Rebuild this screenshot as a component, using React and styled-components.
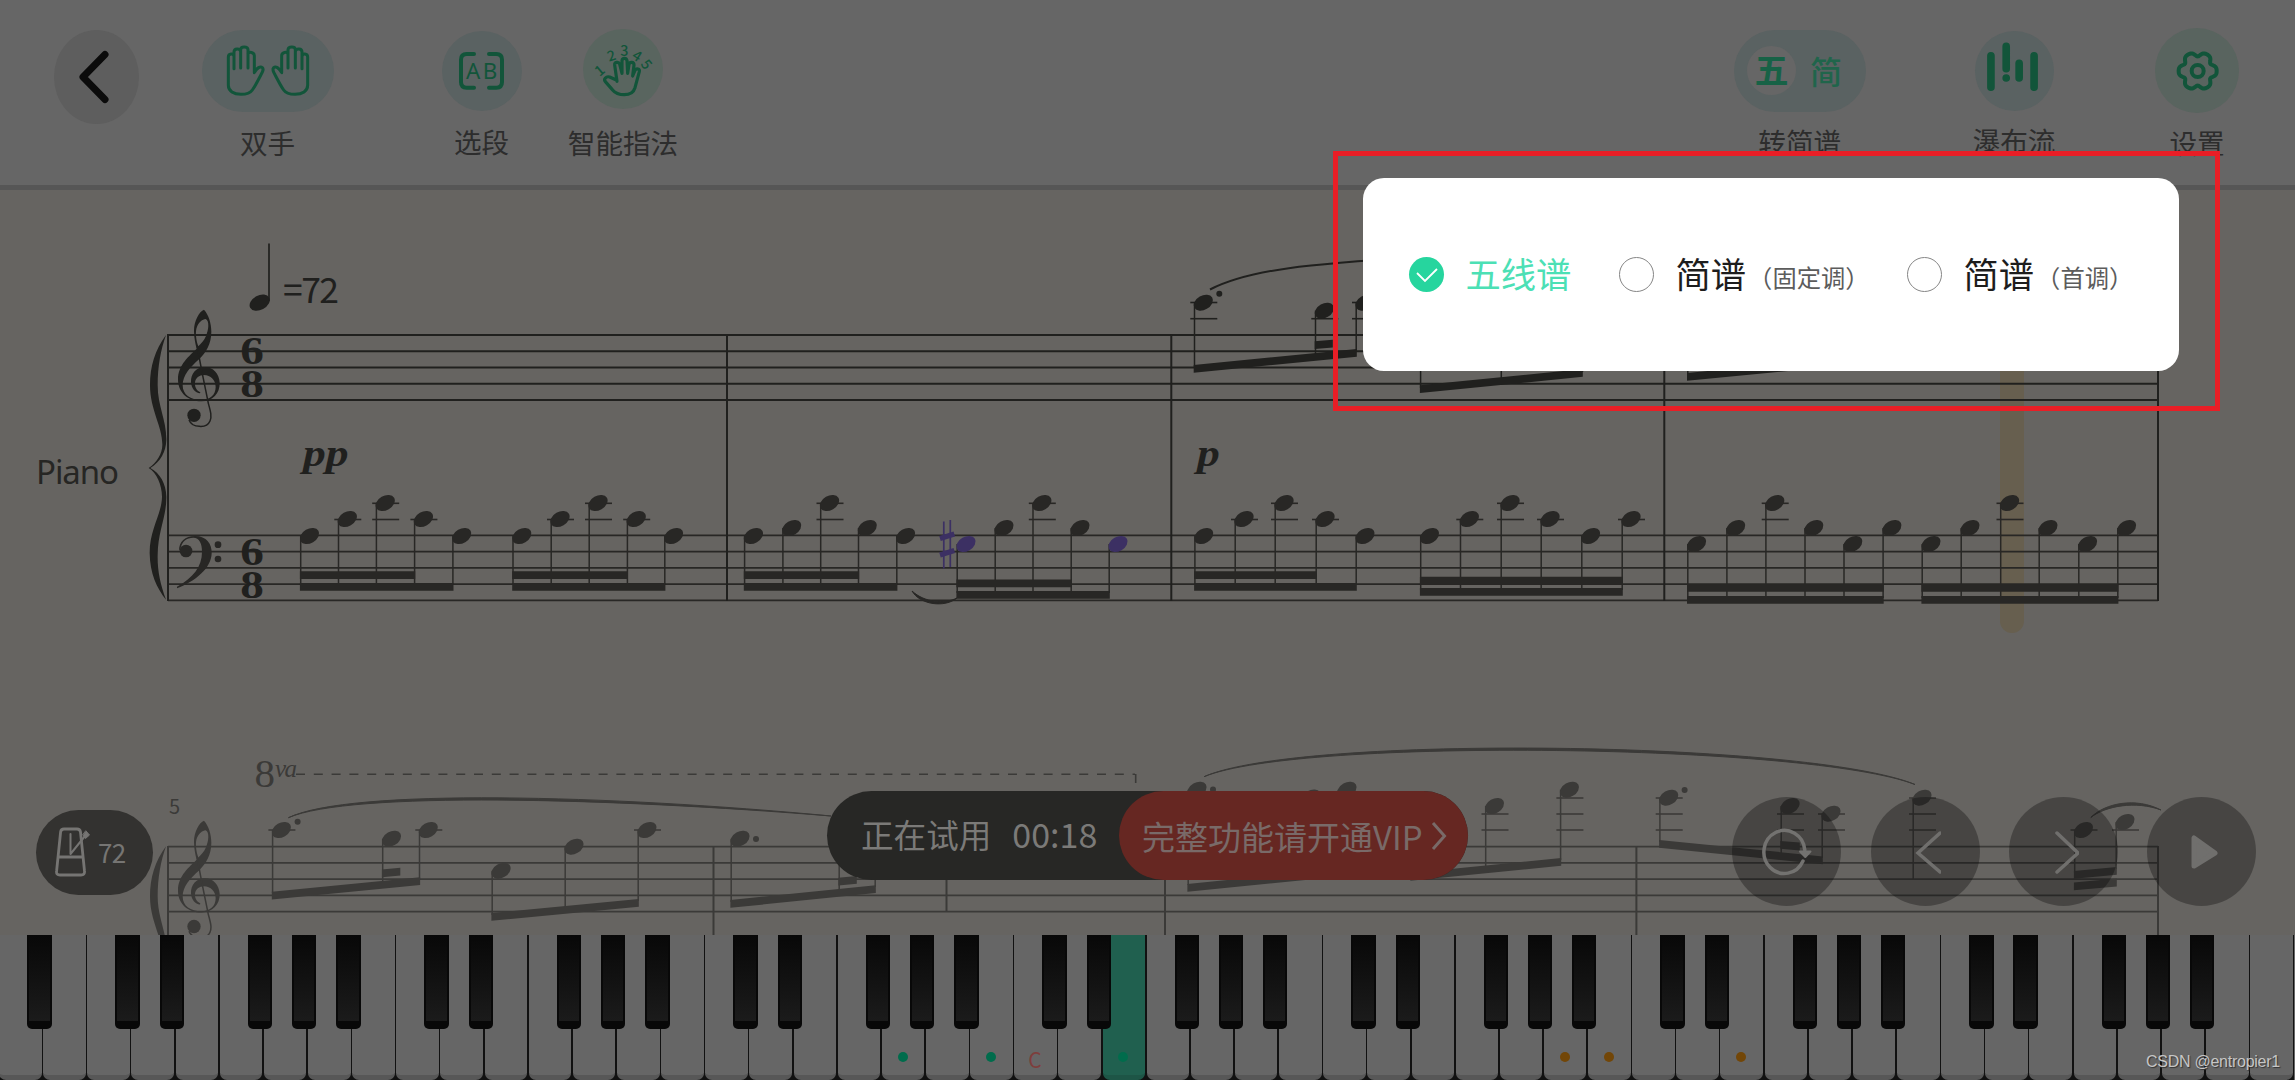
import React from "react";
import styled, { createGlobalStyle } from "styled-components";

const SANS = `"Noto Sans CJK SC", "Noto Sans", sans-serif`;
const SERIF = `"Liberation Serif", serif`;

const GlobalStyle = createGlobalStyle`
  * { box-sizing: border-box; }
  body { margin: 0; background: #666; font-family: ${SANS}; }
`;

const Page = styled.div`
  position: relative;
  display: flex;
  flex-direction: column;
  width: 2295px;
  height: 1080px;
  overflow: hidden;
`;

/* ---------- toolbar ---------- */

const Toolbar = styled.header`
  display: flex;
  flex: none;
  height: 190px;
  padding: 0 56px 0 54px;
  background: #666666;
  border-bottom: 5px solid #565656;
`;

const BackButton = styled.div`
  display: flex;
  align-items: center;
  justify-content: center;
  width: 85px;
  height: 94px;
  margin-top: 30px;
  padding-right: 6px;
  border-radius: 50%;
  background: #5e5e5e;
`;

const ToolItem = styled.div`
  display: flex;
  flex-direction: column;
  align-items: center;
  width: ${(p) => p.$w}px;
  margin-left: ${(p) => (p.$gap === "auto" ? "auto" : `${p.$gap}px`)};
`;

const IconArea = styled.div`
  height: ${(p) => p.$labelTop || 126.5}px;
  padding-top: ${(p) => p.$top}px;
`;

const IconPill = styled.div`
  display: flex;
  align-items: center;
  justify-content: center;
  width: ${(p) => p.$w}px;
  height: ${(p) => p.$h}px;
  border-radius: 42px;
  background: ${(p) => p.$bg || "#5a6262"};
  svg { display: block; overflow: visible; }
`;

const ToolLabel = styled.div`
  font-size: 27.6px;
  line-height: 28px;
  white-space: nowrap;
  color: #2d2d2d;
`;

const SwitchPill = styled(IconPill)`
  justify-content: flex-start;
  padding-left: 13px;
  gap: 14px;
`;

const SwitchActive = styled.span`
  display: flex;
  align-items: center;
  justify-content: center;
  width: 49px;
  height: 49px;
  border-radius: 50%;
  background: #666666;
  color: #176246;
  font-size: 34px;
  font-weight: 700;
  line-height: 46px;
  padding-bottom: 3px;
`;

const SwitchOther = styled.span`
  color: #20654b;
  font-size: 32px;
  font-weight: 500;
  line-height: 47px;
  padding-bottom: 1px;
`;

/* ---------- score ---------- */

const Score = styled.main`
  position: relative;
  flex: none;
  height: 745px;
  background: #666461;
  > svg { display: block; }
`;

const TempoPill = styled.div`
  position: absolute;
  left: 36px;
  top: 620px;
  display: flex;
  align-items: center;
  gap: 7px;
  width: 117px;
  height: 85px;
  padding: 0 0 2px 19px;
  border-radius: 43px;
  background: #333230;
  color: #767573;
  font-size: 26px;
  letter-spacing: -0.7px;
`;

const TrialBar = styled.div`
  position: absolute;
  left: 827px;
  top: 601px;
  display: flex;
  width: 641px;
  height: 89px;
  border-radius: 45px;
  background: #272725;
  color: #7b7a78;
  font-size: 32.6px;
  line-height: 86px;
  white-space: nowrap;
`;

const TrialStatus = styled.div`
  display: flex;
  width: 292px;
  padding-left: 34px;
  gap: 21px;
`;

const TrialTime = styled.span`
  font-size: 34px;
`;

const VipButton = styled.div`
  display: flex;
  align-items: center;
  flex: 1;
  padding-left: 23px;
  gap: 8px;
  border-radius: 45px;
  background: #662722;
  color: #796a68;
  font-size: 33px;
`;

const Transport = styled.div`
  position: absolute;
  right: 39px;
  top: 607px;
  display: flex;
  gap: 29.2px;
`;

const RoundButton = styled.div`
  display: flex;
  align-items: center;
  justify-content: center;
  width: 109px;
  height: 109px;
  border-radius: 50%;
  background: rgba(0, 0, 0, 0.3);
`;

/* ---------- keyboard ---------- */

const Keyboard = styled.footer`
  display: flex;
  flex: none;
  width: 2295px;
  height: 145px;
  margin-left: -1px;
  background: #111;
`;

const WhiteKey = styled.div`
  position: relative;
  display: flex;
  flex: 1 1 0;
  flex-direction: column;
  align-items: center;
  justify-content: flex-end;
  margin-right: 1.6px;
  border-bottom: 5px solid ${(p) => (p.$pressed ? "#1d5546" : "#575757")};
  border-radius: 0 0 7px 7px;
  background: ${(p) => (p.$pressed ? "#20604f" : "#666666")};
`;

const BlackKey = styled.div`
  position: absolute;
  z-index: 1;
  right: -10px;
  top: 0;
  width: 24.4px;
  height: 94px;
  border: solid #080808;
  border-width: 0 2px 8px;
  border-radius: 0 0 5px 5px;
  background: linear-gradient(#080808, #1b1b1b);
`;

const Dot = styled.i`
  width: 10px;
  height: 10px;
  margin: 0 1px 13px 0;
  border-radius: 50%;
  background: ${(p) => p.$color};
`;

const KeyName = styled.span`
  margin-bottom: 1px;
  padding-right: 1px;
  font-size: 21px;
  line-height: 30px;
  color: #7e3e3c;
`;

const Watermark = styled.div`
  position: absolute;
  right: 15px;
  bottom: 7px;
  font: 16px/22px "Liberation Sans", sans-serif;
  letter-spacing: -0.25px;
  color: #c6c6c6;
  text-shadow: 1px 1px 1px #333;
  z-index: 3;
`;

/* ---------- notation chooser ---------- */

const Highlight = styled.div`
  position: absolute;
  left: 1333px;
  top: 151px;
  width: 887px;
  height: 260px;
  border: 5px solid #e91e26;
`;

const Popup = styled.div`
  position: absolute;
  left: 1363px;
  top: 178px;
  display: flex;
  align-items: center;
  width: 816px;
  height: 193px;
  padding-left: 46px;
  border-radius: 21px;
  background: #fff;
`;

const Option = styled.div`
  display: flex;
  align-items: center;
  width: ${(p) => p.$w}px;
  color: ${(p) => (p.$selected ? "#4ce0b5" : "#1d1d1d")};
  font-size: 35.3px;
  line-height: 46px;
  white-space: nowrap;
`;

const OptionName = styled.span`
  padding-bottom: 3px;
`;

const Radio = styled.span`
  display: flex;
  align-items: center;
  justify-content: center;
  width: 35px;
  height: 35px;
  margin-right: 21.5px;
  border: ${(p) => (p.$selected ? "0" : "1.6px solid #868686")};
  border-radius: 50%;
  background: ${(p) => (p.$selected ? "#26d59e" : "#fff")};
`;

const Hint = styled.small`
  margin-left: 2px;
  padding-top: 4px;
  font-size: 24.3px;
  color: #5c5c5c;
`;

/* ---------- toolbar icons ---------- */

const GREEN = "#12553a";

const HAND =
  "M114 195V110C114 98 130 98 131 108V145M131 108V95C131 83 149 83 151 93V143M151 93V88C151 77 172 77 173 88V143M173 100C176 93 192 96 192 106V157C200 142 210 137 216 142C221 147 217 154 212 163C203 180 196 195 186 209C180 218 168 222 152 222C130 222 114 212 114 195";

const HandsIcon = () => (
  <svg width="84" height="52" viewBox="107 74 252 156" fill="none" stroke={GREEN} strokeWidth="9" strokeLinejoin="round" strokeLinecap="round">
    <path d={HAND} />
    <path d={HAND} transform="translate(466 0) scale(-1 1)" />
  </svg>
);

const SectionIcon = () => (
  <svg width="45" height="38" viewBox="807 97 135 114" fill="none" stroke={GREEN} strokeWidth="12" strokeLinecap="round">
    <path d="M852 103H830Q813 103 813 120V187Q813 204 830 204H852" />
    <path d="M897 103H919Q936 103 936 120V187Q936 204 919 204H897" />
    <g fill={GREEN} stroke="none" fontFamily={`"Noto Sans", sans-serif`} fontSize="67">
      <text x="828" y="178">A</text>
      <text x="878" y="178">B</text>
    </g>
  </svg>
);

const FINGERS = [
  ["1", 1228, 152, -40],
  ["2", 1263, 107, -18],
  ["3", 1302, 93, 0],
  ["4", 1340, 108, 32],
  ["5", 1368, 133, 52],
];

const FingeringIcon = () => (
  <svg width="80" height="80" viewBox="1178 27 240 240" fill="none">
    <path
      d="M1278 180L1258 171C1247 168 1239 177 1245 185L1266 209C1276 221 1288 224 1302 224C1318 224 1330 216 1334 203L1347 155C1349 146 1338 144 1334 151L1327 168L1331 135C1331 125 1318 125 1316 133L1312 160L1310 122C1308 113 1296 113 1295 122V160L1288 132C1285 124 1272 126 1273 135L1280 184"
      stroke={GREEN}
      strokeWidth="9.5"
      strokeLinejoin="round"
      strokeLinecap="round"
    />
    <g fill={GREEN} fontFamily={SANS} fontSize="43" fontWeight="500" textAnchor="middle">
      {FINGERS.map(([n, x, y, a]) => (
        <text key={n} transform={`translate(${x} ${y}) rotate(${a})`} y="15">{n}</text>
      ))}
    </g>
  </svg>
);

const WaterfallIcon = () => (
  <svg width="79" height="80" viewBox="763 33 238 240" stroke={GREEN} strokeWidth="23" strokeLinecap="round">
    <path d="M811 107V202M857 79V146M896 130V174M941 107V202M857 174V174.1" />
  </svg>
);

const gearPath = Array.from({ length: 121 }, (_, i) => {
  const t = (i / 120) * Math.PI * 2;
  const r = 52 + 6.6 * Math.cos(6 * t) - 1.6 * Math.cos(12 * t);
  return `${i ? "L" : "M"}${(r * Math.cos(t)).toFixed(2)} ${(r * Math.sin(t)).toFixed(2)}`;
}).join("");

const GearIcon = () => (
  <svg width="44" height="44" viewBox="-68 -66 132 132" fill="none" stroke={GREEN} strokeWidth="12" strokeLinejoin="round">
    <path d={gearPath} />
    <circle r="18" />
  </svg>
);

/* ---------- notation ---------- */

const TOP = "#20201e";
const BASS = "#282725";
const LOW = "#3b3a38";
const PURPLE = "#3c3063";

const Head = ({ x, y, color, r = 10.3 }) => (
  <ellipse cx={x + 9} cy={y} rx={r} ry="7.1" transform={`rotate(-30 ${x + 9} ${y})`} fill={color} />
);

const Note = ({ x, y, end, color, head = color, ledgers = [] }) => (
  <g>
    {ledgers.map((l) => (
      <path key={l} d={`M${x - 4} ${l}h27`} stroke={color} strokeWidth="1.6" />
    ))}
    {end && <path d={`M${x + 0.2} ${y}V${end}`} stroke={color} strokeWidth="1.5" />}
    <Head x={x} y={y} color={head} />
  </g>
);

const Beam = ({ x1, y1, x2, y2, color }) => (
  <path d={`M${x1 - 0.6} ${y1}L${x2 + 0.8} ${y2}v7.8L${x1 - 0.6} ${y1 + 7.8}z`} fill={color} />
);

const bassLedgers = (y) => (y < 510 ? [503.3, 519.5] : y < 522 ? [519.5] : []);

/* xs: stem positions, ys: head positions, inner/outer: tops of the beams, n: stems under the inner beam */
const BASS_GROUPS = [
  { xs: [300.5, 338.3, 376.2, 414.4, 452.7], ys: [536, 519, 503, 519, 536], inner: 571.3, outer: 583, n: 4 },
  { xs: [512.8, 551, 589, 627.2, 664.6], ys: [536, 519, 503, 519, 536], inner: 571.3, outer: 583, n: 4 },
  { xs: [744.4, 782.7, 820.5, 858.3, 896.6], ys: [536, 528, 503, 528, 536], inner: 571.3, outer: 583, n: 4 },
  { xs: [957, 995, 1032.8, 1071, 1109], ys: [544, 528, 503, 528, 544], inner: 579.5, outer: 591, n: 4, purple: [0, 4] },
  { xs: [1194.7, 1235, 1275, 1316, 1356], ys: [536, 519, 503, 519, 536], inner: 571.3, outer: 583, n: 4 },
  { xs: [1420.5, 1460.3, 1501, 1541, 1581.6, 1622], ys: [536, 519, 503, 519, 536, 519], inner: 576.7, outer: 588, n: 6 },
  { xs: [1687.6, 1726.7, 1765.7, 1804.8, 1843.8, 1882.9], ys: [544, 528, 503, 528, 544, 528], inner: 584, outer: 596, n: 6 },
  { xs: [1922, 1961, 2000.5, 2039, 2078.6, 2117.6], ys: [544, 528, 503, 528, 544, 528], inner: 584, outer: 596, n: 6 },
];

const LOW_NOTES = [
  [272.4, 830, 893, [830]],
  [382.5, 838.7, 882],
  [419.3, 830, 880, [830]],
  [492, 870.7, 915],
  [565, 846.7, 907],
  [638, 830, 901, [830]],
  [731, 838.7, 902],
  [839, 838.7, 889],
  [875, 830, 887, [830]],
  [1188, 789.7, 885],
  [1302, 797.5, 873],
  [1338, 789.7, 870],
  [1411, 822, 875],
  [1485.5, 806, 867, [814, 830]],
  [1560.4, 789.7, 860, [798, 814, 830]],
  [1659.7, 797.7, 842, [798, 814, 830]],
  [1781, 806, 853, [814, 830]],
  [1822, 813.7, 858, [814, 830]],
  [1913, 797.7, 879, [798, 814, 830]],
  [2074.5, 830, 873, [830]],
  [2116, 822, 869, [830]],
];

const LOW_BEAMS = [
  [272.4, 891.8, 419.3, 877.3],
  [382.5, 869.4, 399.5, 867.7],
  [492, 913, 638, 899],
  [731, 900, 875, 885.3],
  [839, 877.7, 856, 876],
  [1188, 884, 1347, 868],
  [1411, 873, 1560.4, 858],
  [1659.7, 840, 1822, 856.4],
  [1781, 841, 1799, 842.6],
  [2074.5, 871, 2116, 867],
  [2074.5, 882.4, 2116, 878.6],
];

const Staff = ({ y, color }) =>
  [0, 1, 2, 3, 4].map((i) => (
    <path key={i} d={`M168 ${y + i * 16.25}H2158`} stroke={color} strokeWidth="1.8" />
  ));

const TrebleClef = ({ color }) => (
  <g>
    <path
      fill={color}
      fillRule="evenodd"
      d="M192 239C178 244 162 272 162 302C162 322 166 340 170 356C150 376 113 404 114 450C115 490 146 514 184 514C218 514 240 490 239 458C238 430 218 410 193 411C168 411 152 432 153 456C154 476 166 488 180 490L181 487C170 481 164 472 165 458C166 444 178 435 192 435C212 435 227 450 227 471C227 495 209 510 184 510C152 510 128 495 128 466C128 436 150 412 178 387C198 367 214 342 214 305C214 280 206 254 192 239ZM197 267C209 272 206 300 198 318C192 332 184 340 175 349C168 330 165 305 171 290C177 276 187 268 197 267Z"
    />
    <path d="M172 350C180 400 195 470 205 520C212 545 216 560 210 573C204 587 190 590 178 589C165 589 152 582 147 570" fill="none" stroke={color} strokeWidth="4.5" />
    <circle cx="162" cy="556" r="20" fill={color} />
  </g>
);

const BRACE =
  "M78 315C45 360 30 410 30 465C30 540 68 590 67 645C67 670 50 700 26 714C50 728 66 765 66 800C66 850 28 900 29 970C30 1030 50 1075 78 1109C60 1060 52 1020 53 975C54 900 80 860 79 800C78 760 60 730 31 714C62 695 78 665 79 630C80 570 53 530 53 465C53 410 62 360 78 315Z";

const ScoreSheet = () => (
  <svg width="2295" height="745" viewBox="0 190 2295 745">
    <path d="M2000 300H2024V621a12 12 0 0 1-24 0Z" fill="#675f4f" />

    {/* first system */}
    <Staff y={335} color={TOP} />
    <Staff y={535.4} color={BASS} />
    <path d="M168 334V601M727 334V601M1171.3 334V601M1664.3 334V601M2158 334V601" stroke={TOP} strokeWidth="2" />
    <g transform="translate(140 230) scale(.33333)">
      <TrebleClef color={TOP} />
      <path d={BRACE} fill={TOP} />
      <circle cx="138" cy="963" r="19" fill={BASS} />
      <path
        fill={BASS}
        d="M117 962C117 935 135 918 165 918C200 918 216 942 215 970C214 1015 165 1055 111 1075V1070C160 1042 186 1010 186 965C186 940 178 923 160 923C140 923 125 935 122 955Z"
      />
      <circle cx="234" cy="944" r="10" fill={BASS} />
      <circle cx="234" cy="987" r="10" fill={BASS} />
    </g>
    <g fontFamily={SERIF} fontWeight="700" fontSize="41" textAnchor="middle" fill={TOP}>
      {[["6", 364.3], ["8", 397.3], ["6", 565.2], ["8", 597.7]].map(([n, y]) => (
        <text key={y} transform={`translate(252 ${y}) scale(1.15 1)`}>{n}</text>
      ))}
    </g>
    <g fontFamily={SERIF} fontWeight="700" fontStyle="italic" fontSize="38" fill={TOP}>
      <text transform="translate(303 465.5) scale(1.2 1)">pp</text>
      <text transform="translate(1197 465.5) scale(1.2 1)">p</text>
    </g>
    <text x="36" y="484" fontFamily={`"Noto Sans", sans-serif`} fontSize="33" fill="#262624" textLength="83">Piano</text>

    <ellipse cx="259.7" cy="302.7" rx="10.8" ry="7.2" transform="rotate(-28 259.7 302.7)" fill={TOP} />
    <path d="M269 243.5V301" stroke={TOP} strokeWidth="1.7" />
    <text x="283" y="303" fontFamily={SANS} fontSize="35.5" fill={TOP} textLength="56">=72</text>

    {BASS_GROUPS.map((g) => (
      <g key={g.xs[0]}>
        {g.xs.map((x, i) => (
          <Note
            key={x}
            x={x}
            y={g.ys[i]}
            end={g.outer + 2}
            color={BASS}
            head={g.purple && g.purple.includes(i) ? PURPLE : BASS}
            ledgers={bassLedgers(g.ys[i])}
          />
        ))}
        <Beam x1={g.xs[0]} y1={g.inner} x2={g.xs[g.n - 1]} y2={g.inner} color={BASS} />
        <Beam x1={g.xs[0]} y1={g.outer} x2={g.xs[g.xs.length - 1]} y2={g.outer} color={BASS} />
      </g>
    ))}
    <g stroke={PURPLE}>
      <path d="M943.8 521.5V568.5M950.3 520V567" strokeWidth="1.7" />
      <path d="M940 538.5L954.3 534M940 555L954.3 550.5" strokeWidth="5" />
    </g>
    <path d="M912 591C920 605 945 608 957 598C945 604 925 603 912 591Z" fill={BASS} stroke={BASS} />

    <path d="M1210 289.5C1250 269 1310 264 1420 257" fill="none" stroke={TOP} strokeWidth="2" />
    <Note x={1194.3} y={302.7} end={367} color={TOP} ledgers={[302.5, 318.7]} />
    <circle cx="1219.3" cy="293.8" r="3" fill={TOP} />
    <Note x={1315.3} y={310.7} end={354} color={TOP} ledgers={[318.7]} />
    <Note x={1356} y={302.7} end={351} color={TOP} ledgers={[302.5, 318.7]} />
    <Beam x1={1194.3} y1={365} x2={1356} y2={349} color={TOP} />
    <Beam x1={1315.3} y1={341.3} x2={1332} y2={339.8} color={TOP} />
    <path d="M1420.6 340V388M1501.3 340V379M1582.5 340V372M1687.8 340V376" stroke={TOP} strokeWidth="1.5" />
    <Beam x1={1420.5} y1={385.3} x2={1582} y2={369} color={TOP} />
    <Beam x1={1687.6} y1={373} x2={1850} y2={357} color={TOP} />

    {/* second system */}
    <Staff y={846.7} color={LOW} />
    <path d="M168 846V935M713.5 846V935M1165 846V935M1636.4 846V935M2158 846V935M946.5 870V911" stroke={LOW} strokeWidth="2" />
    <g transform="translate(140 741.2) scale(.33333)">
      <TrebleClef color={LOW} />
      <path d={BRACE} fill={LOW} />
    </g>
    <text x="169" y="813.5" fontFamily={SANS} fontSize="20" fill={LOW}>5</text>
    <text x="254.5" y="787" fontFamily={SERIF} fontSize="41" fill={LOW}>8</text>
    <text x="275" y="776.5" fontFamily={SERIF} fontStyle="italic" fontSize="25" fill={LOW} textLength="22">va</text>
    <path d="M296 774.3H1135" stroke={LOW} strokeWidth="1.6" strokeDasharray="9 8.8" />
    <path d="M1135.7 774V783" stroke={LOW} strokeWidth="1.6" />
    {LOW_NOTES.map(([x, y, end, ledgers]) => (
      <Note key={x} x={x} y={y} end={end} ledgers={ledgers} color={LOW} />
    ))}
    {LOW_BEAMS.map(([x1, y1, x2, y2]) => (
      <Beam key={`${x1}-${y1}`} x1={x1} y1={y1} x2={x2} y2={y2} color={LOW} />
    ))}
    {[[297.6, 821.8], [756, 839], [1213, 789.5], [1684.6, 790]].map(([x, y]) => (
      <circle key={x} cx={x} cy={y} r="3" fill={LOW} />
    ))}
    <g fill={LOW} stroke={LOW} strokeWidth="1">
      <path d="M288.4 817.7C350 788 610 795 831 816C610 798 350 791 288.4 817.7Z" />
      <path d="M1204 776.7C1300 734 1810 741 1915 784.5C1810 744 1300 737 1204 776.7Z" />
      <path d="M2090.8 817.5C2105 803 2136 797 2161 810C2136 800.5 2105 806 2090.8 817.5Z" />
    </g>
  </svg>
);

const MetronomeIcon = () => (
  <svg width="36" height="50" viewBox="0 0 36 50" fill="none" stroke="#767573" strokeWidth="2.8" strokeLinejoin="round" strokeLinecap="round">
    <path d="M9 2H22Q25 2 25.5 5L29.5 44Q30 48 26 48H5Q1 48 1.6 44L5.6 5Q6 2 9 2Z" />
    <path d="M4 30H27" />
    <path d="M15.5 7V27L30 9" strokeWidth="2" />
    <path d="M31 4L34.5 8L30.5 11.5L28 8Z" fill="#767573" strokeWidth="1" />
  </svg>
);

/* ---------- keyboard data ---------- */

const OCTAVE = "ABCDEFG";
const DOTS = { 20: "#006c4c", 22: "#006c4c", 25: "#006c4c", 35: "#724607", 36: "#724607", 39: "#724607" };
const PRESSED = 25;
const MIDDLE_C = 23;

const KEYS = Array.from({ length: 52 }, (_, i) => ({
  i,
  sharp: "ACDFG".includes(OCTAVE[i % 7]) && i < 51,
}));

export default function App() {
  return (
    <Page>
      <GlobalStyle />
      <Toolbar>
        <BackButton>
          <svg width="32" height="54" viewBox="0 0 32 54" fill="none" stroke="#0b0b0b" strokeWidth="7" strokeLinecap="round" strokeLinejoin="round">
            <path d="M27 4.5L5 27L27 49.5" />
          </svg>
        </BackButton>
        <ToolItem $w={132} $gap={62.5}>
          <IconArea $top={29.5} $labelTop={127.5}>
            <IconPill $w={132} $h={82}><HandsIcon /></IconPill>
          </IconArea>
          <ToolLabel>双手</ToolLabel>
        </ToolItem>
        <ToolItem $w={80} $gap={108}>
          <IconArea $top={31}>
            <IconPill $w={80} $h={80}><SectionIcon /></IconPill>
          </IconArea>
          <ToolLabel>选段</ToolLabel>
        </ToolItem>
        <ToolItem $w={80} $gap={61.5}>
          <IconArea $top={29} $labelTop={127.5}>
            <IconPill $w={80} $h={80} $bg="#59655f"><FingeringIcon /></IconPill>
          </IconArea>
          <ToolLabel>智能指法</ToolLabel>
        </ToolItem>
        <ToolItem $w={131.5} $gap="auto">
          <IconArea $top={29.5}>
            <SwitchPill $w={131.5} $h={82}>
              <SwitchActive>五</SwitchActive>
              <SwitchOther>简</SwitchOther>
            </SwitchPill>
          </IconArea>
          <ToolLabel>转简谱</ToolLabel>
        </ToolItem>
        <ToolItem $w={79} $gap={109}>
          <IconArea $top={31} $labelTop={125.5}>
            <IconPill $w={79} $h={80}><WaterfallIcon /></IconPill>
          </IconArea>
          <ToolLabel>瀑布流</ToolLabel>
        </ToolItem>
        <ToolItem $w={84} $gap={101.5}>
          <IconArea $top={28} $labelTop={127.5}>
            <IconPill $w={84} $h={85} $bg="#59645f"><GearIcon /></IconPill>
          </IconArea>
          <ToolLabel>设置</ToolLabel>
        </ToolItem>
      </Toolbar>

      <Score>
        <ScoreSheet />
        <TempoPill>
          <MetronomeIcon />
          <span>72</span>
        </TempoPill>
        <TrialBar>
          <TrialStatus>
            <span>正在试用</span>
            <TrialTime>00:18</TrialTime>
          </TrialStatus>
          <VipButton>
            <span>完整功能请开通VIP</span>
            <svg width="16" height="30" viewBox="0 0 16 30" fill="none" stroke="#796a68" strokeWidth="3">
              <path d="M2 2L13.5 15L2 28" />
            </svg>
          </VipButton>
        </TrialBar>
        <Transport>
          <RoundButton>
            <svg width="56" height="56" viewBox="1.5 0 56 56" fill="none" stroke="#737270" strokeWidth="3.5" strokeLinecap="round">
              <path d="M45.5 37A20.5 21.5 0 1 1 47.3 26" />
              <path d="M42.5 27.5L47.8 33L53 27.5Z" fill="#737270" strokeWidth="2" strokeLinejoin="round" />
            </svg>
          </RoundButton>
          <RoundButton>
            <svg width="32" height="44" viewBox="0 0 32 44" fill="none" stroke="#706f6d" strokeWidth="3.5" strokeLinecap="round">
              <path d="M31 3L9 23L31 42" />
            </svg>
          </RoundButton>
          <RoundButton>
            <svg width="32" height="44" viewBox="0 0 32 44" fill="none" stroke="#706f6d" strokeWidth="3.5" strokeLinecap="round">
              <path d="M10 3L31 23L10 42" />
            </svg>
          </RoundButton>
          <RoundButton>
            <svg width="36" height="40" viewBox="0 0 36 40" fill="#706f6d" stroke="#706f6d" strokeWidth="5" strokeLinejoin="round">
              <path d="M10 6V34L31 21Z" />
            </svg>
          </RoundButton>
        </Transport>
      </Score>

      <Keyboard>
        {KEYS.map(({ i, sharp }) => (
          <WhiteKey key={i} $pressed={i === PRESSED}>
            {sharp && <BlackKey />}
            {DOTS[i] && <Dot $color={DOTS[i]} />}
            {i === MIDDLE_C && <KeyName>C</KeyName>}
          </WhiteKey>
        ))}
      </Keyboard>
      <Watermark>CSDN @entropier1</Watermark>

      <Highlight />
      <Popup>
        <Option $selected $w={210}>
          <Radio $selected>
            <svg width="22" height="16" viewBox="0 0 22 16" fill="none" stroke="#fff" strokeWidth="1.8">
              <path d="M1 6L9 14L21 2" />
            </svg>
          </Radio>
          <OptionName>五线谱</OptionName>
        </Option>
        <Option $w={288}>
          <Radio />
          <OptionName>简谱</OptionName>
          <Hint>（固定调）</Hint>
        </Option>
        <Option $w={250}>
          <Radio />
          <OptionName>简谱</OptionName>
          <Hint>（首调）</Hint>
        </Option>
      </Popup>
    </Page>
  );
}
